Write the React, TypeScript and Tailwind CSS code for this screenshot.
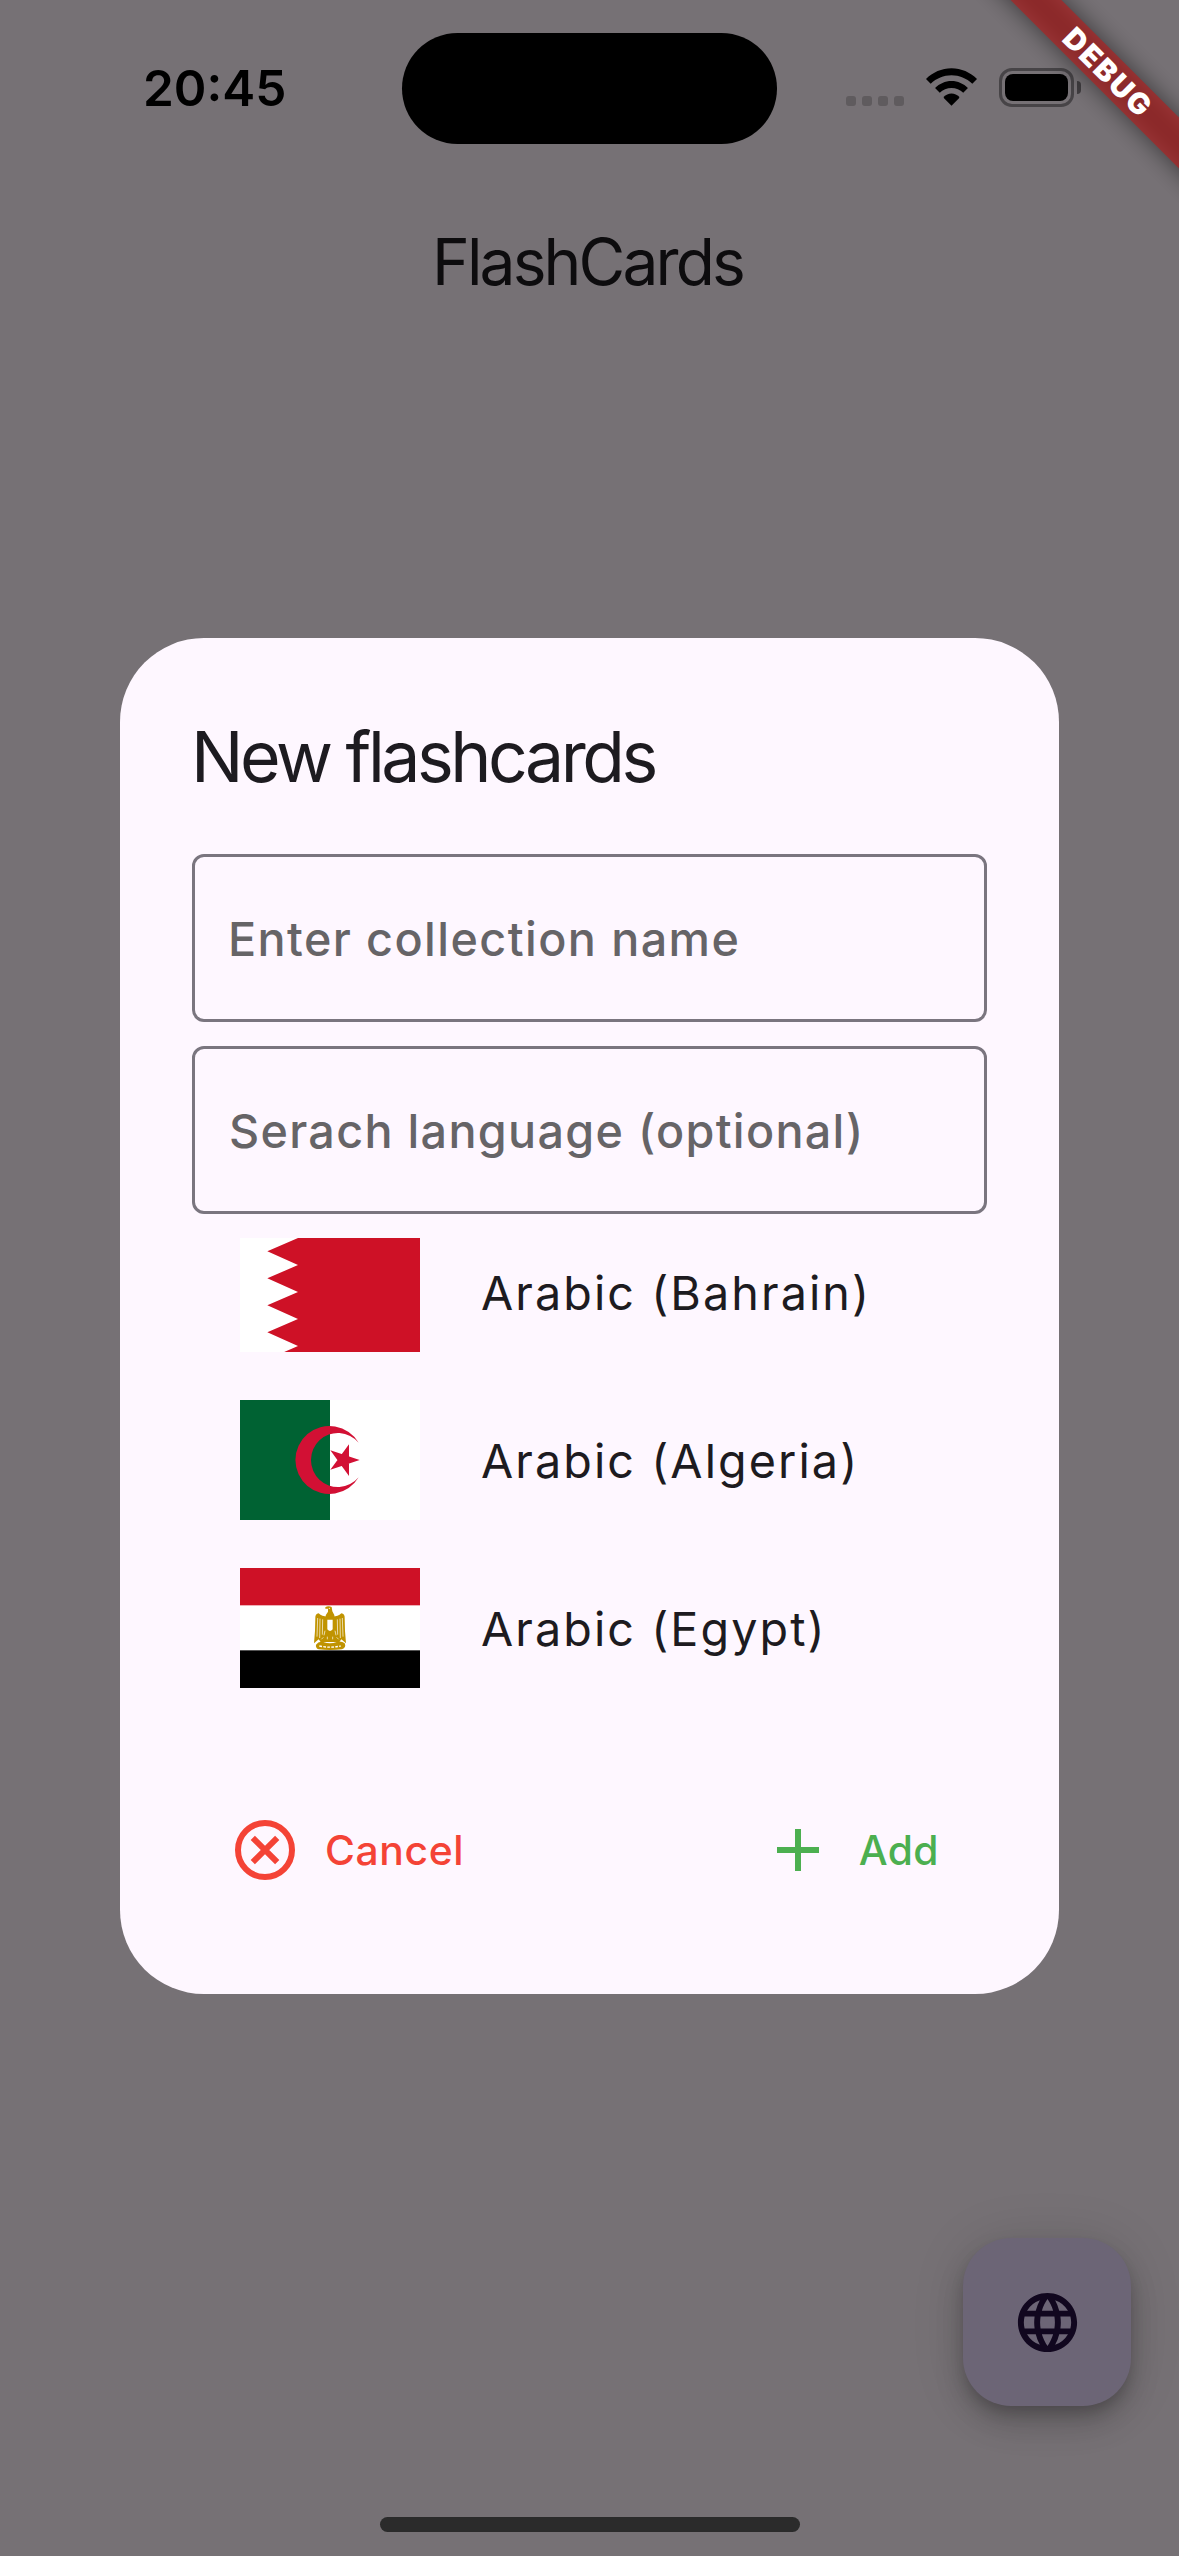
import type { ReactNode } from "react";
import { MdAdd, MdLanguage } from "react-icons/md";

function BahrainFlag() {
  return (
    <svg viewBox="0 0 540 360" className="block h-[120px] w-[180px]">
      <rect width="540" height="360" fill="#fff" />
      <path
        d="M82 -22L174 18L82 58L174 99L82 139L174 180L82 220L174 261L82 301L174 342L82 382H540V-22Z"
        fill="#CE1126"
      />
    </svg>
  );
}

function AlgeriaFlag() {
  return (
    <svg viewBox="0 0 540 360" className="block h-[120px] w-[180px]">
      <rect width="540" height="360" fill="#fff" />
      <rect width="270" height="360" fill="#006233" />
      <path d="M356 128A102 102 0 1 0 356 232A81 81 0 1 1 356 128Z" fill="#D21034" />
      <path d="M359 180L271 151L327 228L327 133L271 209Z" fill="#D21034" />
    </svg>
  );
}

function EgyptFlag() {
  return (
    <svg viewBox="0 0 540 360" className="block h-[120px] w-[180px]">
      <rect width="540" height="360" fill="#fff" />
      <rect width="540" height="112" fill="#CE1126" />
      <rect y="247" width="540" height="113" fill="#000" />
      <g fill="#C09300">
        <path d="M256 118Q264 112 275 117L277 130Q284 140 284 150H256Q256 140 264 131V122H256Z" />
        <path d="M262 146Q246 146 236 136Q225 138 226 150Q226 190 222 226L236 214L242 222H298L304 214L318 226Q314 190 314 150Q315 138 304 136Q294 146 278 146Z" />
        <path d="M228 230Q236 218 250 222Q270 230 290 222Q304 218 314 226Q320 238 306 244Q270 248 236 244Q226 240 228 230Z" />
      </g>
      <g fill="none" stroke="#fff" strokeWidth="2">
        <path d="M233 150L231 206M240 152L239 210M248 154L247 200M292 154L293 200M300 152L301 210M307 150L309 206" />
        <path d="M255 188L252 202M285 188L288 202M244 214L250 208M296 214L290 208M262 206V214M278 206V214" />
        <path d="M238 234Q270 241 302 234" strokeDasharray="8 4" strokeWidth="4" />
      </g>
      <path d="M262 155H278V184Q270 194 262 184Z" fill="#fff" />
      <circle cx="268" cy="121" r="2" fill="#fff" />
    </svg>
  );
}

function CancelIcon() {
  return (
    <svg viewBox="0 0 24 24" fill="none" stroke="currentColor" strokeWidth="2" className="block size-[72px]">
      <circle cx="12" cy="12" r="9" />
      <path d="M7.93 7.93L16.07 16.07M16.07 7.93L7.93 16.07" />
    </svg>
  );
}

function WifiIcon() {
  return (
    <svg viewBox="0 0 152 112" className="block h-[38px] w-[51px]">
      <path
        d="M76 0C105 0 132 12 152 32L138 46C121 30 99 21 76 21C53 21 31 30 14 46L0 32C20 12 47 0 76 0Z"
        fill="#000"
      />
      <path
        d="M76 38C95 38 112 46 125 59L111 73C102 64 89 59 76 59C63 59 50 64 41 73L27 59C40 46 57 38 76 38Z"
        fill="#000"
      />
      <path d="M76 75C85 75 93 79 99 85V89L76 112L53 89V85C59 79 67 75 76 75Z" fill="#000" />
    </svg>
  );
}

function StatusBar() {
  return (
    <header className="flex h-[177px] items-start">
      <div className="flex h-[177px] w-[402px] items-center pb-[2px] pl-[143px]">
        <span className="text-[49.5px] leading-[60px] font-semibold text-black">20:45</span>
      </div>
      <div className="mt-[33px] h-[111px] w-[375px] rounded-full bg-black" />
      <div className="mt-[68px] ml-[69px] flex">
        <div className="mt-[28px] flex gap-[6px]">
          <span className="size-[10px] rounded-[3px] bg-[#5f5b5e]" />
          <span className="size-[10px] rounded-[3px] bg-[#5f5b5e]" />
          <span className="size-[10px] rounded-[3px] bg-[#5f5b5e]" />
          <span className="size-[10px] rounded-[3px] bg-[#5f5b5e]" />
        </div>
        <div className="ml-[22px]">
          <WifiIcon />
        </div>
        <div className="ml-[22px] h-[39px] w-[75px] rounded-[13px] border-[3px] border-[#474447] p-[3px]">
          <div className="h-full w-full rounded-[8px] bg-black" />
        </div>
        <div className="mt-[13px] ml-[3px] h-[13px] w-[4px] rounded-r-full bg-[#3f3c3f]" />
      </div>
    </header>
  );
}

function DebugBanner() {
  return (
    <div className="pointer-events-none absolute top-0 right-0 size-[260px] overflow-hidden">
      <div className="absolute top-[53px] left-[-12px] h-[36px] w-[400px] rotate-45 bg-black/50 blur-[12px]" />
      <div className="absolute top-[53px] left-[-12px] flex h-[36px] w-[400px] rotate-45 items-center justify-center bg-[#b71c1c]/63 pl-[4px]">
        <span className="text-[29.5px] leading-[36px] font-black tracking-[2px] text-white">DEBUG</span>
      </div>
    </div>
  );
}

function Field({ children }: { children: ReactNode }) {
  return (
    <div className="flex h-[168px] items-center rounded-[12px] border-[3px] border-[#7a757f] pt-[3px] text-[46.7px] leading-[72px] font-medium whitespace-nowrap text-[#666467]">
      {children}
    </div>
  );
}

function LanguageRow({ flag, name }: { flag: ReactNode; name: string }) {
  return (
    <li className="flex h-[120px] shrink-0 items-center pl-[48px]">
      {flag}
      <span className="mt-[2px] ml-[61px] text-[46.7px] leading-[72px] tracking-[2.08px] text-[#1d1b20]">{name}</span>
    </li>
  );
}

function NewFlashcardsDialog() {
  return (
    <section className="h-[1356px] w-[939px] rounded-[84px] bg-[#fef7ff] px-[72px] pt-[72px]">
      <h2 className="h-[96px] text-[69.7px] leading-[94px] tracking-[-3.48px] text-[#1d1b20]">
        <span className="-ml-px">New flashcards</span>
      </h2>
      <div className="mt-[48px] flex flex-col gap-[24px]">
        <Field>
          <span className="ml-[33px] tracking-[1.42px]">Enter collection name</span>
        </Field>
        <Field>
          <span className="ml-[34px] tracking-[1.3px]">Serach language (optional)</span>
        </Field>
      </div>
      <div className="mt-[24px] h-[450px] overflow-hidden">
        <ul className="-mt-[6px] flex flex-col gap-[48px]">
          <LanguageRow flag={<BahrainFlag />} name="Arabic (Bahrain)" />
          <LanguageRow flag={<AlgeriaFlag />} name="Arabic (Algeria)" />
          <LanguageRow flag={<EgyptFlag />} name="Arabic (Egypt)" />
        </ul>
      </div>
      <div className="mt-[126px] flex justify-between pr-[48px] pl-[37px] text-[40.8px] leading-[72px] font-medium">
        <button className="flex items-center text-[#f44336]">
          <CancelIcon />
          <span className="ml-[24px] tracking-[0.63px]">Cancel</span>
        </button>
        <button className="flex items-center text-[#4caf50]">
          <MdAdd className="size-[72px]" />
          <span className="ml-[25px] tracking-[0.44px]">Add</span>
        </button>
      </div>
    </section>
  );
}

export default function App() {
  return (
    <main className="relative h-[2556px] w-[1179px] overflow-hidden bg-[#767175] font-['Inter',sans-serif]">
      <StatusBar />
      <h1 className="pt-[45px] pr-[4px] text-center text-[64px] leading-[80px] tracking-[-2.86px] text-[#0d0c0e]">
        FlashCards
      </h1>
      <button className="absolute right-[48px] bottom-[150px] flex size-[168px] items-center justify-center rounded-[48px] bg-[#6c6576] text-[#11071f] shadow-[0_9px_15px_-3px_rgba(0,0,0,0.2),0_18px_30px_0_rgba(0,0,0,0.14),0_3px_54px_0_rgba(0,0,0,0.12)]">
        <MdLanguage className="size-[71px]" />
      </button>
      <div className="absolute inset-0 flex justify-center pt-[637.5px]">
        <NewFlashcardsDialog />
      </div>
      <div className="absolute bottom-[24px] left-[380px] h-[15px] w-[420px] rounded-full bg-[#2b2b2b]" />
      <DebugBanner />
    </main>
  );
}
